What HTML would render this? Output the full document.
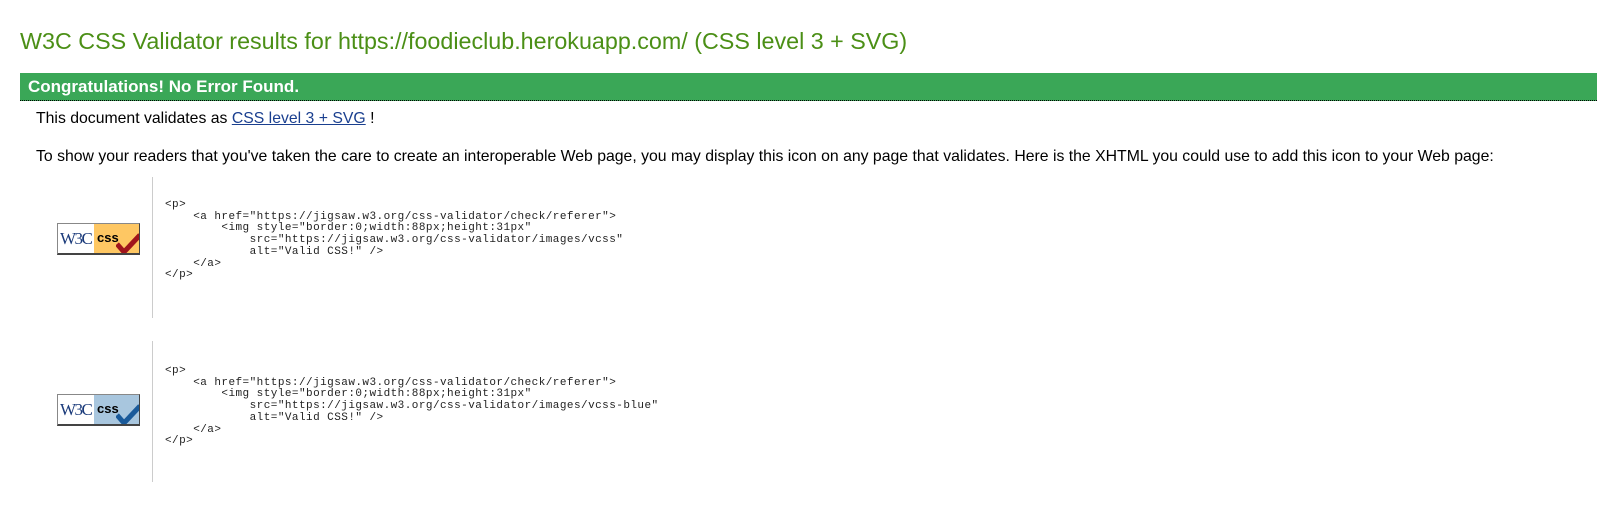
<!DOCTYPE html>
<html><head><meta charset="utf-8"><style>
body{margin:0;width:1597px;height:511px;background:#fff;position:relative;overflow:hidden;font-family:"Liberation Sans",Arial,sans-serif;color:#000}
h1{position:absolute;left:20px;top:28px;margin:0;font-weight:normal;font-size:23.3px;color:#4b8f16;white-space:nowrap}
.bar{position:absolute;left:20px;top:73px;width:1577px;height:27px;background:#3aa757;border-bottom:1px dotted #000;color:#fff;font-weight:bold;font-size:17px;line-height:28px;text-indent:8px;white-space:nowrap}
p.t{position:absolute;left:36px;margin:0;font-size:15.8px;white-space:nowrap}
a{color:#1a3f8f}
.vl{position:absolute;left:152px;width:1px;background:#ccc}
pre{position:absolute;left:165px;margin:0;font-family:"Liberation Mono",monospace;font-size:11px;line-height:11.7px;color:#222;letter-spacing:0.45px}
.badge{position:absolute;left:57px;width:81px;height:29px;border:1px solid #888;border-right-color:#444;border-bottom:2px solid #444;background:#fff;overflow:hidden}
.badge .w{position:absolute;left:2px;top:5px;font-family:"Liberation Serif",serif;font-size:17px;color:#1a3a7a;letter-spacing:-1.5px}
.badge .c{position:absolute;left:36px;top:0;width:45px;height:29px}
.badge .c span{position:absolute;left:3px;top:6px;font-weight:bold;font-size:13px}
.badge svg{position:absolute;left:58px;top:9px}
</style></head><body>
<h1>W3C CSS Validator results for https://foodieclub.herokuapp.com/ (CSS level 3 + SVG)</h1>
<div class="bar">Congratulations! No Error Found.</div>
<p class="t" style="top:110px">This document validates as <a href="#">CSS level 3 + SVG</a> !</p>
<p class="t" style="top:148px">To show your readers that you've taken the care to create an interoperable Web page, you may display this icon on any page that validates. Here is the XHTML you could use to add this icon to your Web page:</p>

<div class="vl" style="top:177px;height:141px"></div>
<div class="badge" style="top:223px"><span class="w">W3C</span><div class="c" style="background:#fec763"><span>css</span></div><svg width="26" height="22" viewBox="0 0 26 22"><path d="M1 11 L8 19 L24 2" stroke="#a0141c" stroke-width="5" fill="none"/></svg></div>
<pre style="top:200px">&lt;p&gt;
    &lt;a href="https://jigsaw.w3.org/css-validator/check/referer"&gt;
        &lt;img style="border:0;width:88px;height:31px"
            src="https://jigsaw.w3.org/css-validator/images/vcss"
            alt="Valid CSS!" /&gt;
    &lt;/a&gt;
&lt;/p&gt;</pre>

<div class="vl" style="top:341px;height:141px"></div>
<div class="badge" style="top:394px"><span class="w">W3C</span><div class="c" style="background:#a8c6de"><span>css</span></div><svg width="26" height="22" viewBox="0 0 26 22"><path d="M1 11 L8 19 L24 2" stroke="#1a5a9a" stroke-width="5" fill="none"/></svg></div>
<pre style="top:366px">&lt;p&gt;
    &lt;a href="https://jigsaw.w3.org/css-validator/check/referer"&gt;
        &lt;img style="border:0;width:88px;height:31px"
            src="https://jigsaw.w3.org/css-validator/images/vcss-blue"
            alt="Valid CSS!" /&gt;
    &lt;/a&gt;
&lt;/p&gt;</pre>
</body></html>
